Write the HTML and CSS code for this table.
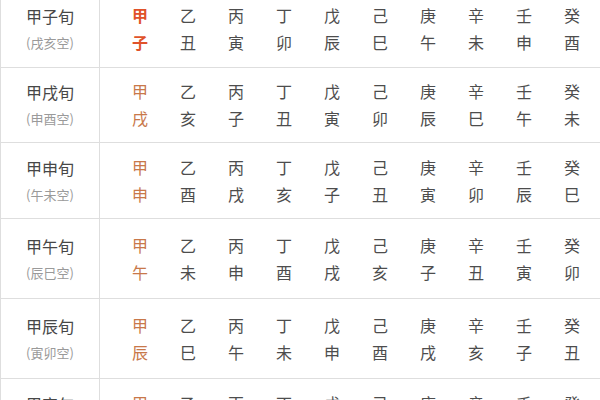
FILE: index.html
```html
<!DOCTYPE html>
<html lang="zh">
<head>
<meta charset="utf-8">
<link rel="stylesheet" href="styles.css">
</head>
<body>
<div class="table">
  <div class="row">
    <div class="label"><span class="name">甲子旬</span><span class="void">(戌亥空)</span></div>
    <div class="cells first">
      <span class="jia">甲</span><span>乙</span><span>丙</span><span>丁</span><span>戊</span><span>己</span><span>庚</span><span>辛</span><span>壬</span><span>癸</span>
      <span class="jia">子</span><span>丑</span><span>寅</span><span>卯</span><span>辰</span><span>巳</span><span>午</span><span>未</span><span>申</span><span>酉</span>
    </div>
  </div>
  <div class="row">
    <div class="label"><span class="name">甲戌旬</span><span class="void">(申酉空)</span></div>
    <div class="cells">
      <span class="jia">甲</span><span>乙</span><span>丙</span><span>丁</span><span>戊</span><span>己</span><span>庚</span><span>辛</span><span>壬</span><span>癸</span>
      <span class="jia">戌</span><span>亥</span><span>子</span><span>丑</span><span>寅</span><span>卯</span><span>辰</span><span>巳</span><span>午</span><span>未</span>
    </div>
  </div>
  <div class="row">
    <div class="label"><span class="name">甲申旬</span><span class="void">(午未空)</span></div>
    <div class="cells">
      <span class="jia">甲</span><span>乙</span><span>丙</span><span>丁</span><span>戊</span><span>己</span><span>庚</span><span>辛</span><span>壬</span><span>癸</span>
      <span class="jia">申</span><span>酉</span><span>戌</span><span>亥</span><span>子</span><span>丑</span><span>寅</span><span>卯</span><span>辰</span><span>巳</span>
    </div>
  </div>
  <div class="row">
    <div class="label"><span class="name">甲午旬</span><span class="void">(辰巳空)</span></div>
    <div class="cells">
      <span class="jia">甲</span><span>乙</span><span>丙</span><span>丁</span><span>戊</span><span>己</span><span>庚</span><span>辛</span><span>壬</span><span>癸</span>
      <span class="jia">午</span><span>未</span><span>申</span><span>酉</span><span>戌</span><span>亥</span><span>子</span><span>丑</span><span>寅</span><span>卯</span>
    </div>
  </div>
  <div class="row">
    <div class="label"><span class="name">甲辰旬</span><span class="void">(寅卯空)</span></div>
    <div class="cells">
      <span class="jia">甲</span><span>乙</span><span>丙</span><span>丁</span><span>戊</span><span>己</span><span>庚</span><span>辛</span><span>壬</span><span>癸</span>
      <span class="jia">辰</span><span>巳</span><span>午</span><span>未</span><span>申</span><span>酉</span><span>戌</span><span>亥</span><span>子</span><span>丑</span>
    </div>
  </div>
  <div class="row">
    <div class="label"><span class="name">甲寅旬</span><span class="void">(子丑空)</span></div>
    <div class="cells">
      <span class="jia">甲</span><span>乙</span><span>丙</span><span>丁</span><span>戊</span><span>己</span><span>庚</span><span>辛</span><span>壬</span><span>癸</span>
      <span class="jia">寅</span><span>卯</span><span>辰</span><span>巳</span><span>午</span><span>未</span><span>申</span><span>酉</span><span>戌</span><span>亥</span>
    </div>
  </div>
</div>
</body>
</html>
```

FILE: styles.css
```css
html, body {
  margin: 0;
  padding: 0;
  background: #ffffff;
  overflow: hidden;
}
body {
  width: 600px;
  height: 400px;
  font-family: "Noto Sans CJK SC", "Noto Sans", sans-serif;
  color: #4a4a4a;
}
.table {
  margin-top: -9px;
  width: 600px;
  border-left: 1px solid #dedede;
}
.row {
  display: grid;
  grid-template-columns: 99px 1fr;
  height: 77px;
  box-sizing: border-box;
  border-bottom: 1px solid #dedede;
}
.row:nth-child(2) {
  height: 75px;
}
.row:nth-child(3) {
  height: 76px;
}
.row:nth-child(4),
.row:nth-child(5) {
  height: 80px;
}
.label {
  display: flex;
  flex-direction: column;
  align-items: center;
  justify-content: center;
  border-right: 1px solid #dedede;
}
.name {
  font-size: 16px;
  line-height: 28px;
  font-weight: 400;
  color: #474747;
}
.void {
  font-size: 13px;
  line-height: 26px;
  color: #9a9a9a;
}
.cells {
  display: grid;
  grid-template-columns: repeat(10, 48px);
  align-content: center;
  padding-left: 16px;
  font-size: 16px;
  line-height: 27px;
  color: #4d4d4d;
}
.cells span {
  text-align: center;
}
.cells .jia {
  color: #c8784a;
}
.cells.first .jia {
  color: #e0522a;
  font-weight: 700;
}
```
